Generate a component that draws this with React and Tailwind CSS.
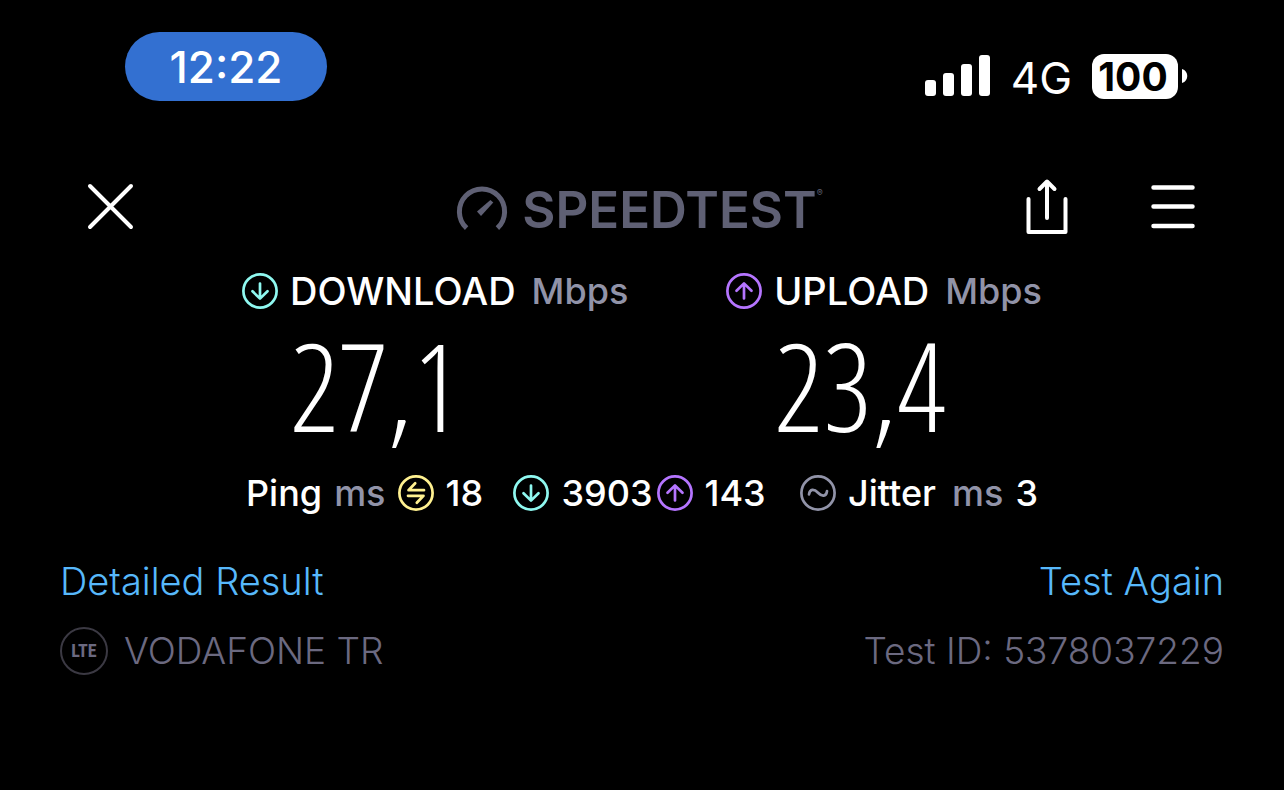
function CircleIcon({ className, label, children }) {
  return (
    <svg
      className={`size-9 shrink-0 ${className}`}
      viewBox="0 0 36 36"
      fill="none"
      stroke="currentColor"
      strokeWidth="2.7"
      strokeLinecap="round"
      strokeLinejoin="round"
      role="img"
      aria-label={label}
    >
      <circle cx="18" cy="18" r="16.6" />
      {children}
    </svg>
  );
}

function DownIcon() {
  return (
    <CircleIcon className="text-[#8ff8f0]" label="Download">
      <path d="M18 10.5V25M10.5 18.3L18 25.6L25.5 18.3" />
    </CircleIcon>
  );
}

function UpIcon() {
  return (
    <CircleIcon className="text-[#b575ff]" label="Upload">
      <path d="M18 25.5V11M10.5 17.7L18 10.4L25.5 17.7" />
    </CircleIcon>
  );
}

function PingIcon() {
  return (
    <CircleIcon className="text-[#fff190]" label="Idle ping">
      <path d="M26 15.2H10.5L17.2 8.2M10 20.8H25.5L18.8 27.8" />
    </CircleIcon>
  );
}

function JitterIcon() {
  return (
    <CircleIcon className="text-[#9193a8]" label="Jitter">
      <path d="M9 19.4C9.8 13.8 14 13.6 18 17.8C22 22 26.2 21.8 27 16.2" />
    </CircleIcon>
  );
}

function StatusBar() {
  return (
    <div className="flex items-start justify-between pt-8 pr-24 pl-[125px]">
      <div className="flex h-[69px] w-[202px] items-center justify-center rounded-full bg-[#3370d1] text-[44px] leading-none font-medium">
        <time>12:22</time>
      </div>
      <div className="flex items-center pt-5">
        <svg className="h-11 w-17" viewBox="0 0 68 44" fill="#fff" role="img" aria-label="Signal strength">
          <rect x="2" y="26" width="11" height="16" rx="3" />
          <rect x="20" y="19" width="11" height="23" rx="3" />
          <rect x="38" y="10" width="11" height="32" rx="3" />
          <rect x="56" y="1" width="11" height="41" rx="3" />
        </svg>
        <span className="ml-5 pt-1 text-[44px] leading-none">4G</span>
        <span className="ml-5 flex h-[45px] w-[86px] items-center justify-center rounded-xl bg-white pr-1 text-[39px] leading-none font-bold text-black">
          100
        </span>
        <svg className="ml-1 h-4 w-1.5" viewBox="0 0 6 16" fill="#fff" aria-hidden="true">
          <path d="M0 1C7 3 7 13 0 15Z" />
        </svg>
      </div>
    </div>
  );
}

function Header() {
  return (
    <header className="mt-19 grid grid-cols-[1fr_auto_1fr] items-center pr-[87px] pl-20">
      <button type="button" aria-label="Close" className="size-15 justify-self-start">
        <svg className="size-15" viewBox="0 0 60 60" fill="none" stroke="#fff" strokeWidth="4" strokeLinecap="round">
          <path d="M10 9L51 50M51 9L10 50" />
        </svg>
      </button>
      <div className="flex items-center gap-3 pt-1 text-[#5f6074]">
        <svg className="h-13 w-14" viewBox="0 0 56 52" fill="none" aria-hidden="true">
          <path d="M12.6 45.2A22.6 22.6 0 1 1 43.4 45.2" stroke="currentColor" strokeWidth="5" />
          <path d="M36.400 17L39.300 19.600L27 33L23 28.600Z" fill="currentColor" />
        </svg>
        <h1 className="flex items-start text-[51px] leading-none font-semibold">
          SPEEDTEST<sup className="top-0 pt-1 text-[9px] leading-none font-normal">®</sup>
        </h1>
      </div>
      <div className="flex items-center gap-20 justify-self-end">
        <button type="button" aria-label="Share">
          <svg className="h-15 w-11" viewBox="0 0 44 60" fill="none" stroke="#fff" strokeWidth="4" strokeLinecap="round" strokeLinejoin="round">
            <path d="M3.500 22V55H40.500V22M22 41V5M14.500 12L22 4.500L29.500 12" />
          </svg>
        </button>
        <button type="button" aria-label="Menu">
          <svg className="h-15 w-12" viewBox="0 0 48 60" fill="none" stroke="#fff" strokeWidth="4.500" strokeLinecap="round">
            <path d="M4.500 10.500H43.500M4.500 29.500H43.500M4.500 49H43.500" />
          </svg>
        </button>
      </div>
    </header>
  );
}

function Speed({ icon, label, value }) {
  return (
    <section>
      <h2 className="flex items-center gap-3 text-[36px] leading-11 font-medium">
        {icon}
        <span className="text-[38px]">{label}</span>
        <span className="ml-1 text-[#9193a8]">Mbps</span>
      </h2>
      <p className="mb-3.5 pl-12 font-['Open_Sans_Condensed_Light','Open_Sans_Condensed','Roboto_Condensed',sans-serif] text-[122px] leading-36 font-light">
        {value}
      </p>
    </section>
  );
}

export default function App() {
  return (
    <div className="min-h-screen bg-black pb-12 font-['Inter','Liberation_Sans',sans-serif] text-white">
      <StatusBar />
      <Header />
      <main>
        <div className="mx-auto mt-8 flex w-full max-w-[800px] justify-between">
          <Speed icon={<DownIcon />} label="DOWNLOAD" value="27,1" />
          <Speed icon={<UpIcon />} label="UPLOAD" value="23,4" />
        </div>
        <div className="mx-auto flex w-full max-w-[792px] items-center justify-between text-[36px] leading-11 font-medium">
          <div className="flex items-center gap-3">
            <span>Ping</span>
            <span className="text-[#9193a8]">ms</span>
            <PingIcon />
            <span>18</span>
          </div>
          <div className="flex items-center gap-1 pr-1">
            <div className="flex items-center gap-3"><DownIcon />3903</div>
            <div className="flex items-center gap-3"><UpIcon />143</div>
          </div>
          <div className="flex items-center gap-3">
            <JitterIcon />
            <span>Jitter</span>
            <span className="ml-1 text-[#9193a8]">ms</span>
            <span>3</span>
          </div>
        </div>
        <nav className="mt-11 flex justify-between px-15 text-[38px] leading-11 font-light text-[#57b8fb]">
          <a href="#details">Detailed Result</a>
          <a href="#again">Test Again</a>
        </nav>
        <div className="mt-6 flex items-center justify-between px-15 text-[37px] leading-12 font-light text-[#6b6980]">
          <div className="flex items-center gap-4">
            <span className="flex size-12 items-center justify-center rounded-full border-2 border-[#3b3943] font-['Roboto_Condensed','Roboto',sans-serif] text-[18px] leading-none font-bold">
              LTE
            </span>
            <span>VODAFONE TR</span>
          </div>
          <span>Test ID: 5378037229</span>
        </div>
      </main>
    </div>
  );
}
